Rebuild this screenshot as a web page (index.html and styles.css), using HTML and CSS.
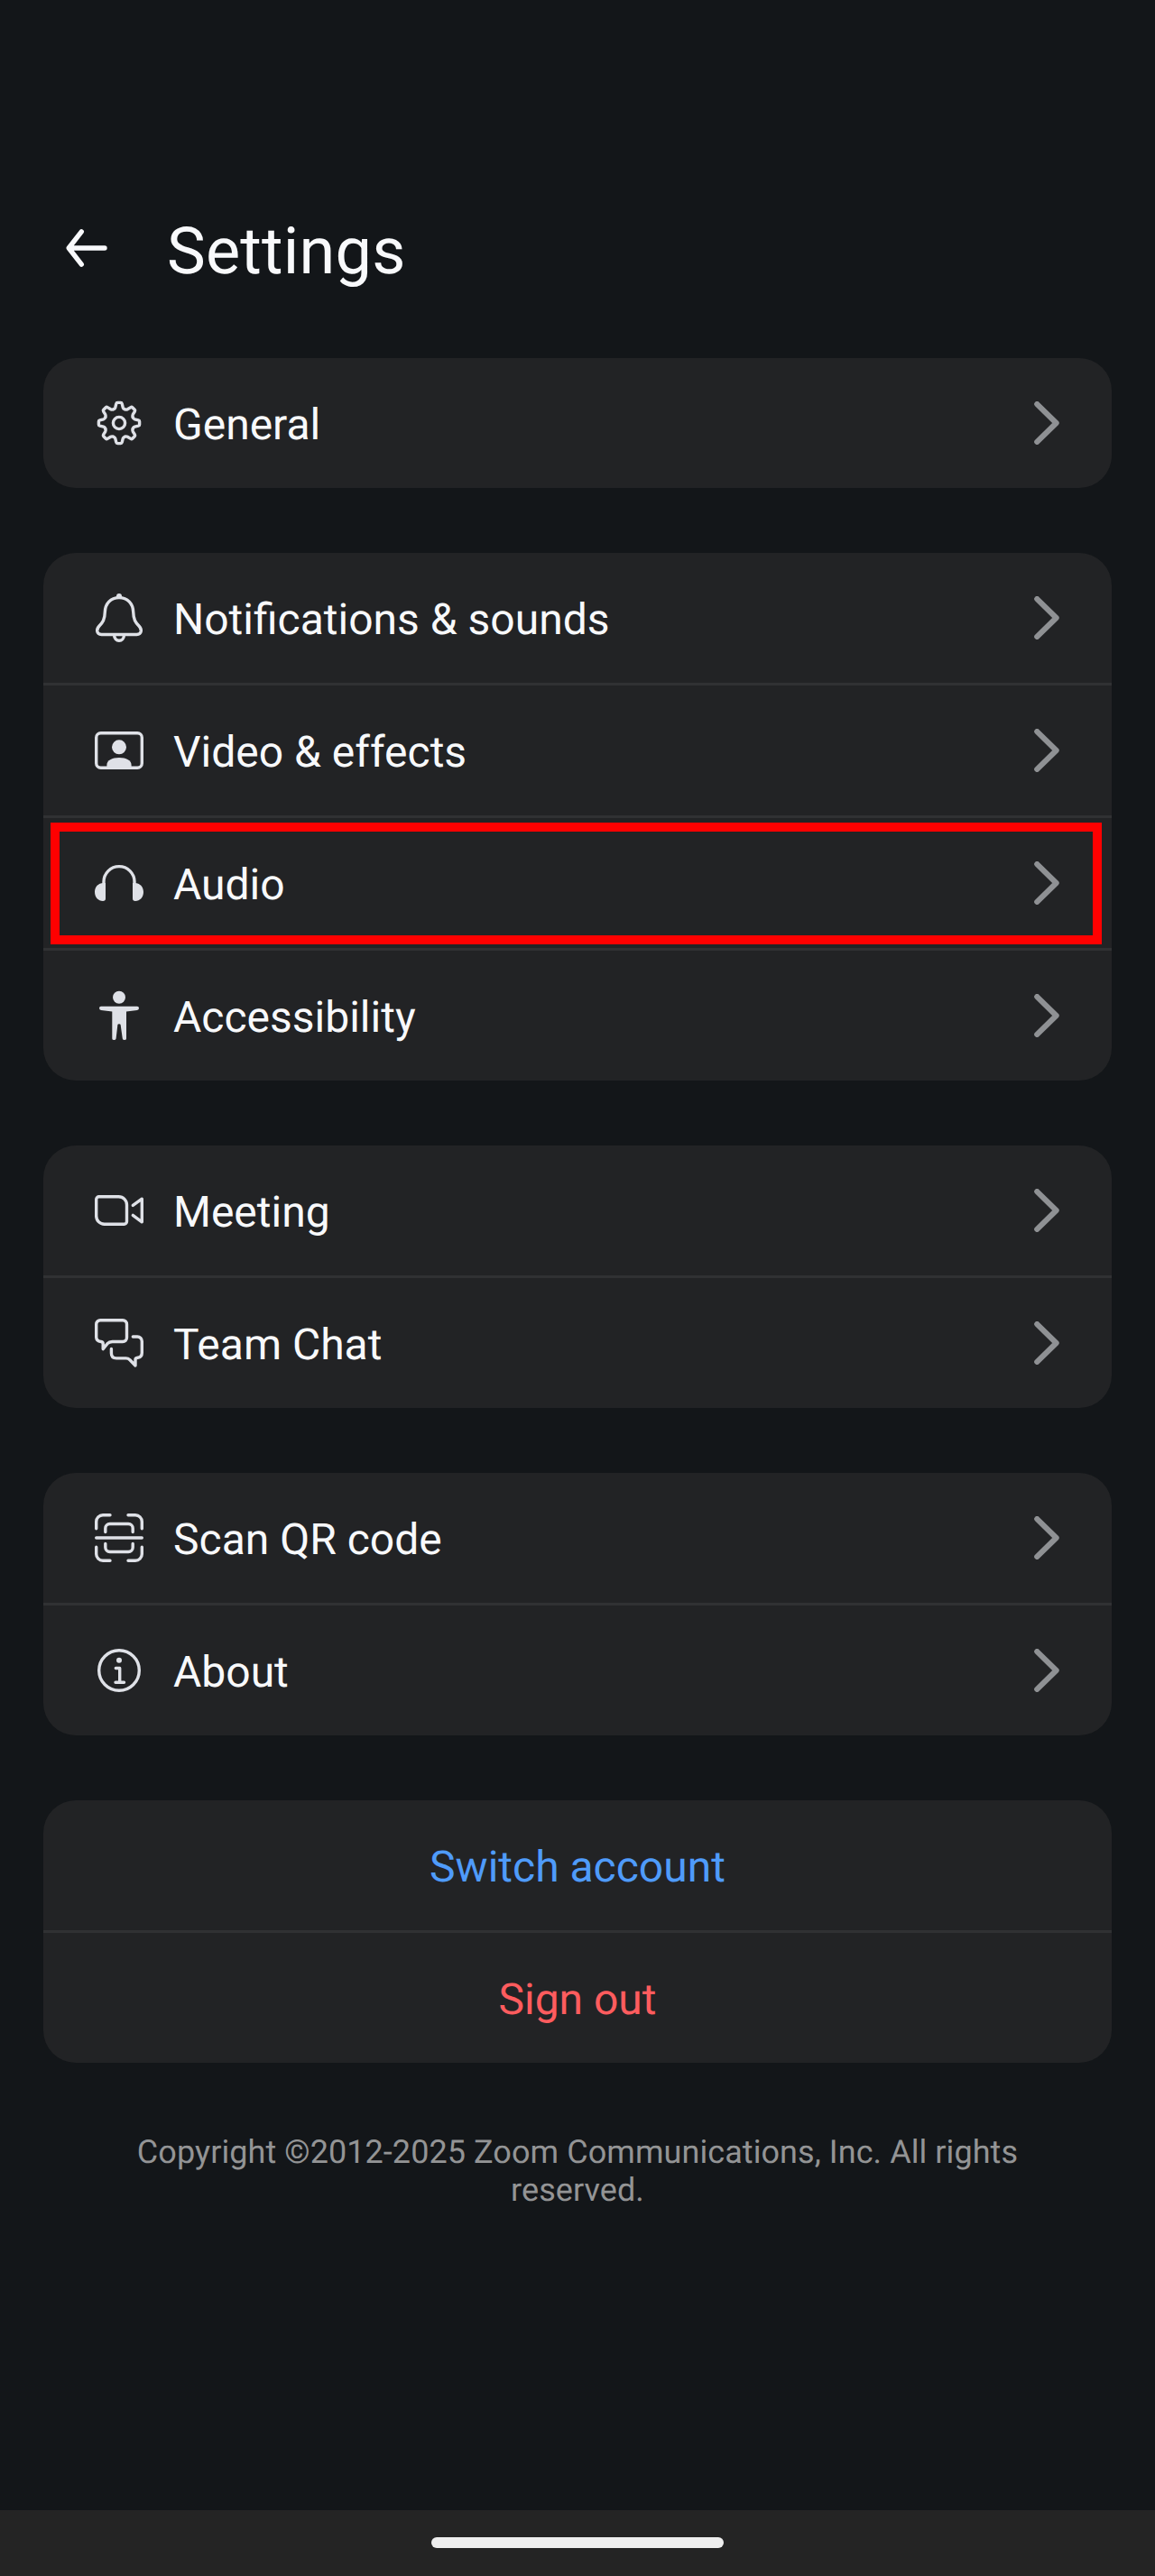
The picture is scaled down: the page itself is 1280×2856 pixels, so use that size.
FILE: index.html
```html
<!DOCTYPE html>
<html lang="en">
<head>
<meta charset="utf-8">
<title>Settings</title>
<link rel="stylesheet" href="styles.css">
</head>
<body>
<svg class="defs" width="0" height="0" aria-hidden="true">
  <symbol id="chevron" viewBox="0 0 28 48"><path d="M3.3 3.1 24.6 24 3.3 44.9"/></symbol>
  <path id="tooth" d="M-6.3 -15.2Q-4.6 -15.9 -4.2 -17.3L-3.2 -21.4Q-2.9 -22.6 -1.8 -22.6H1.8Q2.9 -22.6 3.2 -21.4L4.2 -17.3Q4.6 -15.9 6.3 -15.2"/>
</svg>
<header class="header">
  <svg class="back" viewBox="0 0 48 48"><path d="M44 24H5M18.3 5.8 4.2 24 18.3 42.2"/></svg>
  <h1 class="title">Settings</h1>
</header>
<main class="groups">
  <section class="card">
    <div class="row">
      <svg class="icon" viewBox="0 0 60 60"><g transform="translate(30 30)"><use href="#tooth"/><use href="#tooth" transform="rotate(45)"/><use href="#tooth" transform="rotate(90)"/><use href="#tooth" transform="rotate(135)"/><use href="#tooth" transform="rotate(180)"/><use href="#tooth" transform="rotate(225)"/><use href="#tooth" transform="rotate(270)"/><use href="#tooth" transform="rotate(315)"/><circle r="6.6"/></g></svg>
      <span class="label">General</span>
      <svg class="chevron"><use href="#chevron"/></svg>
    </div>
  </section>
  <section class="card">
    <div class="row">
      <svg class="icon" viewBox="0 0 60 60"><path d="M30 7.6C20.5 7.6 14.6 14.5 14.3 23.5C14.1 32 11.8 35 8 39C5.6 41.5 5.5 43.2 5.7 44.8C6.1 47.2 8 48.5 10.5 48.5H49.5C52 48.5 53.9 47.2 54.3 44.8C54.5 43.2 54.4 41.5 52 39C48.2 35 45.9 32 45.7 23.5C45.4 14.5 39.5 7.6 30 7.6ZM24.6 49.5a5.4 5.8 0 0 0 10.8 0"/><circle class="solid" cx="30" cy="6" r="3"/></svg>
      <span class="label">Notifications &amp; sounds</span>
      <svg class="chevron"><use href="#chevron"/></svg>
    </div>
    <div class="row">
      <svg class="icon" viewBox="0 0 60 60"><rect x="4.7" y="10.7" width="50.6" height="38.6" rx="5"/><circle class="solid" cx="30" cy="26.3" r="8"/><path class="solid" d="M16.4 50V46C16.4 41 22 38 30 38S43.6 41 43.6 46V50Z"/></svg>
      <span class="label">Video &amp; effects</span>
      <svg class="chevron"><use href="#chevron"/></svg>
    </div>
    <div class="row highlighted">
      <svg class="icon" viewBox="0 0 60 60"><path d="M13 32V28.6a17 17 0 0 1 34 0V32"/><path class="solid" d="M15 30H12.5C7 30 3 34.2 3 40S7 50 12 50Q15 50 15 47.3ZM45 30H47.5C53 30 57 34.2 57 40S53 50 48 50Q45 50 45 47.3Z"/></svg>
      <span class="label">Audio</span>
      <svg class="chevron"><use href="#chevron"/></svg>
    </div>
    <div class="row">
      <svg class="icon" viewBox="0 0 60 60"><circle class="solid" cx="30" cy="9.7" r="7"/><path class="solid" d="M10 19.8H50Q52 19.8 52 21.8Q52 23.6 50 23.9L38 25.4V55.5Q38 57 36 57Q34 57 33.8 55.5L31.6 40Q31.3 39.2 30 39.2T28.4 40L26.6 55.5Q26.4 57 24.3 57Q22.3 57 22.3 55.5V25.4L10 23.9Q8 23.6 8 21.8Q8 19.8 10 19.8Z"/></svg>
      <span class="label">Accessibility</span>
      <svg class="chevron"><use href="#chevron"/></svg>
    </div>
  </section>
  <section class="card">
    <div class="row">
      <svg class="icon" viewBox="0 0 60 60"><path d="M7.7 14.7H29.5A9 9 0 0 1 38.5 23.7V42.3A3 3 0 0 1 35.5 45.3H13.7A9 9 0 0 1 4.7 36.3V17.7A3 3 0 0 1 7.7 14.7ZM45.3 24.4 55.3 17.2V42.8L45.3 35.4"/></svg>
      <span class="label">Meeting</span>
      <svg class="chevron"><use href="#chevron"/></svg>
    </div>
    <div class="row">
      <svg class="icon" viewBox="0 0 60 60"><path d="M9.2 4.7H34A4.5 4.5 0 0 1 38.5 9.2V24A4.5 4.5 0 0 1 34 28.5H22.5Q19 28.5 17 30.7L12.2 36.6V31Q12.2 28.8 10 28.5Q4.7 28 4.7 23.5V9.2A4.5 4.5 0 0 1 9.2 4.7ZM45.3 23H50.3A5 5 0 0 1 55.3 28V41Q55.3 45.5 50.5 46.3Q48 46.6 48 48.5V55L42 48.8Q40 46.9 37.5 46.9H27Q21.4 46.9 21.4 41.3V36.5"/></svg>
      <span class="label">Team Chat</span>
      <svg class="chevron"><use href="#chevron"/></svg>
    </div>
  </section>
  <section class="card">
    <div class="row">
      <svg class="icon" viewBox="0 0 60 60"><path d="M4.7 19.8V12A7.3 7.3 0 0 1 12 4.7H20M40 4.7H48A7.3 7.3 0 0 1 55.3 12V19.8M55.3 40.2V48A7.3 7.3 0 0 1 48 55.3H40M20 55.3H12A7.3 7.3 0 0 1 4.7 48V40.2M4.7 30H55.3M14.8 23.5V19.5A5 5 0 0 1 19.8 14.5H40.2A5 5 0 0 1 45.2 19.5V23.5M14.8 36.5V40.5A5 5 0 0 0 19.8 45.5H40.2A5 5 0 0 0 45.2 40.5V36.5"/></svg>
      <span class="label">Scan QR code</span>
      <svg class="chevron"><use href="#chevron"/></svg>
    </div>
    <div class="row">
      <svg class="icon" viewBox="0 0 60 60"><circle cx="30" cy="30" r="22.3"/><circle class="solid" cx="30" cy="18.7" r="3"/><path d="M26.3 27.5H30.7V43M26 43.2H35.5"/></svg>
      <span class="label">About</span>
      <svg class="chevron"><use href="#chevron"/></svg>
    </div>
  </section>
  <section class="card">
    <div class="row action switch"><span class="label">Switch account</span></div>
    <div class="row action signout"><span class="label">Sign out</span></div>
  </section>
</main>
<p class="copyright">Copyright ©2012-2025 Zoom Communications, Inc. All rights reserved.</p>
<footer class="navbar"><div class="pill"></div></footer>
</body>
</html>
```
FILE: styles.css
```css
* { box-sizing: border-box; }
body {
  margin: 0;
  height: 2856px;
  display: flex;
  flex-direction: column;
  background: #131619;
  color: #f8f9fb;
  font-family: Roboto, sans-serif;
  font-size: 48px;
  text-rendering: geometricPrecision;
}
svg {
  flex: none;
  fill: none;
  stroke-linecap: round;
  stroke-linejoin: round;
}
.defs { position: absolute; }
.header {
  display: flex;
  align-items: center;
  height: 397px;
  padding: 153px 72px 0;
  gap: 65px;
}
.back {
  width: 48px;
  height: 48px;
  stroke: #f8f9fb;
  stroke-width: 5.4;
}
.title {
  margin: 7px 0 0;
  font-size: 72px;
  font-weight: 400;
  line-height: 84px;
  letter-spacing: 0.2px;
}
.groups {
  display: flex;
  flex-direction: column;
  gap: 72px;
  padding: 0 48px;
}
.card {
  border-radius: 36px;
  background: #222325;
}
.row {
  position: relative;
  display: flex;
  align-items: center;
  gap: 30px;
  height: 144px;
  padding: 0 58px 0 54px;
}
.row + .row {
  height: 147px;
  border-top: 3px solid #303133;
}
.icon {
  width: 60px;
  height: 60px;
  stroke: #dfe1e7;
  stroke-width: 3.4;
}
.solid { fill: #dfe1e7; stroke: none; }
.label {
  flex: 1;
  padding-top: 3px;
  line-height: 56px;
}
.chevron {
  width: 28px;
  height: 48px;
  stroke: #8f9194;
  stroke-width: 6.2;
}
.highlighted::after {
  content: "";
  position: absolute;
  inset: 5px 11px 4px 8px;
  border: 10px solid #f00;
}
.action { text-align: center; padding: 0; }
.switch { color: #4f9bfa; }
.signout { color: #ff5c5e; }
.copyright {
  margin: 78px 132px 0;
  color: #939495;
  font-size: 36px;
  line-height: 42px;
  letter-spacing: 0.07px;
  text-align: center;
}
.navbar {
  display: flex;
  justify-content: center;
  height: 73px;
  margin-top: auto;
  padding-top: 30px;
  background: #242424;
}
.pill {
  width: 324px;
  height: 12px;
  border-radius: 6px;
  background: #eee;
}
```
